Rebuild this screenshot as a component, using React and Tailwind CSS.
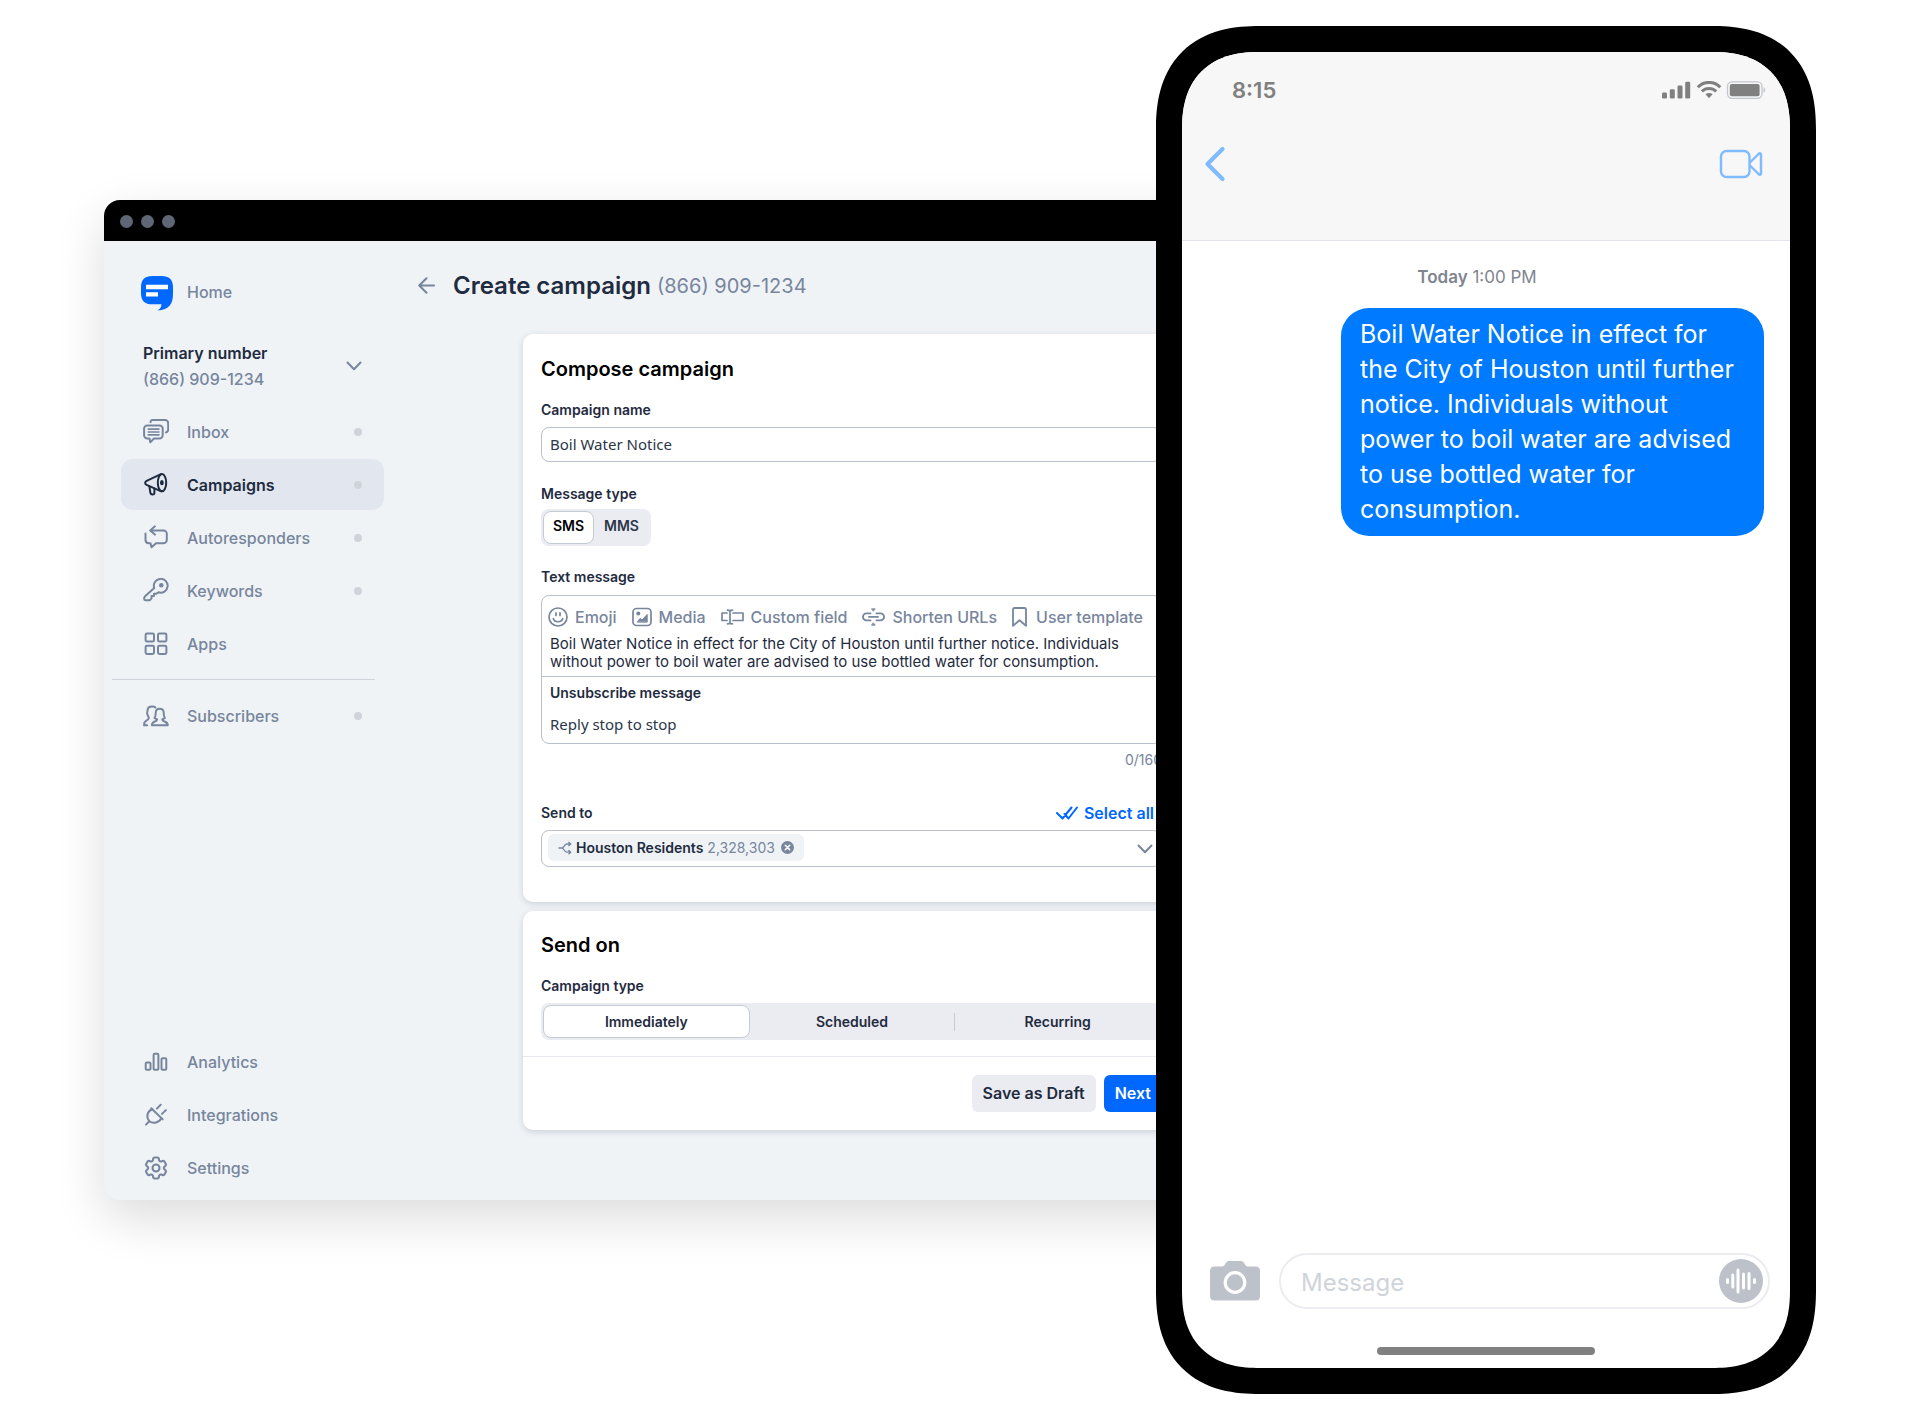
import React from "react";
import { HiOutlineCog6Tooth } from "react-icons/hi2";

const stroke = {
  fill: "none",
  stroke: "currentColor",
  strokeWidth: 2,
  strokeLinecap: "round",
  strokeLinejoin: "round",
};

function NavIcon({ children }) {
  return (
    <svg viewBox="0 0 26 26" className="size-[26px] shrink-0" aria-hidden="true" {...stroke}>
      {children}
    </svg>
  );
}

const InboxIcon = () => (
  <NavIcon>
    <path d="M7.5 3.2C7.7 1.8 8.5 1.1 9.8 1.1H22a3.2 3.2 0 0 1 3.2 3.2v6.2c0 1.600-.8 2.600-2.300 2.900" />
    <path d="M4.300 6.400H16.500a3.200 3.200 0 0 1 3.200 3.200v6.700a3.200 3.200 0 0 1-3.200 3.200H11L7.300 23.200 6.500 19.500H4.300A3.200 3.200 0 0 1 1.100 16.300V9.600A3.200 3.200 0 0 1 4.300 6.400Z" />
    <path strokeWidth="1.600" d="M5.200 10.100H16M5.200 13H16M5.200 15.900H16" />
  </NavIcon>
);

const MegaphoneIcon = () => (
  <NavIcon>
    <ellipse cx="19" cy="10.700" rx="4.200" ry="8.600" />
    <path d="M18 2.200 3.600 8.900c-1.900.9-1.900 3.100 0 4L18.200 19.300" />
    <ellipse cx="18.900" cy="10.700" rx=".9" ry="1.600" fill="currentColor" />
    <path d="M6.300 14.200 7.500 21.300c.4 1.700 3.900 1.700 3.900-.3V16.600" />
  </NavIcon>
);

const AutoIcon = () => (
  <NavIcon>
    <path d="M11.900 1.300 7.300 5.400 11.900 9.600" />
    <path d="M7.600 5.400H20.400a3.400 3.400 0 0 1 3.400 3.400v6.100a3.400 3.400 0 0 1-3.400 3.400H13L8.500 22.300 7.500 18.300H5.800A3.500 3.500 0 0 1 2.500 14.800V8.600" />
  </NavIcon>
);

const KeyIcon = () => (
  <NavIcon>
    <path d="M11.200 9.900A6.900 6.900 0 1 1 15.600 14.300L13.400 15.700H11V18.100H8.500V20.400L6.800 22.200H2.300C1.500 22.200 1.200 21.900 1.200 21.100V20c0-.6.200-1 .6-1.400Z" />
    <circle cx="18.300" cy="7.200" r="1.300" fill="currentColor" />
  </NavIcon>
);

const AppsIcon = () => (
  <NavIcon>
    <rect x="2.600" y="2.400" width="8.400" height="8.200" rx="1.400" />
    <rect x="15" y="2.400" width="8.400" height="8.200" rx="1.400" />
    <rect x="2.600" y="14.700" width="8.400" height="8.200" rx="1.400" />
    <rect x="15" y="14.700" width="8.400" height="8.200" rx="1.400" />
  </NavIcon>
);

const PeopleIcon = () => (
  <NavIcon>
    <path d="M9 22.300H24.700c.3-2.200-1.200-3-3.200-3.800-1.600-.6-2.200-1.100-2.200-2.100.6-.4 1.600-.6 2.600-1.400-1.200-1.200-1.200-2.700-1.200-4.900 0-2.700-1.500-4.300-4-4.300s-4 1.600-4 4.300c0 2.200 0 3.700-1.200 4.900 1 .8 2 1 2.600 1.400 0 1-.6 1.500-2.200 2.100-2 .8-3.200 1.600-2.900 3.800Z" />
    <path d="M12.400 4.500C11.700 3.700 10.600 3.400 9.200 3.400 6.300 3.400 4.500 5 4.500 7.700c0 1-.4 1.600-.4 2.500 0 1.800 1.700 3.200 1.700 4.900 0 1.200-1.200 1.800-2.500 2.500C1.700 18.500.9 19.900 1.100 22.300H4.200" />
  </NavIcon>
);

const BarsIcon = () => (
  <NavIcon>
    <rect x="2.700" y="13.500" width="4.800" height="7.300" rx="1.100" />
    <rect x="10.600" y="4.800" width="4.800" height="16" rx="1.100" />
    <rect x="18.500" y="9.200" width="4.800" height="11.600" rx="1.100" />
  </NavIcon>
);

const PlugIcon = () => (
  <NavIcon>
    <path d="M3 22.600 6.300 19.300M8.300 6.200 19.700 17.400M17.700 2.800 13.900 6.600M22.900 8.100 19 11.900" />
    <path d="M9.200 7.200C4 9.300 2.900 15 6.300 19.200 10.400 22.200 16 20.800 18.400 16.300" />
  </NavIcon>
);

const CogIcon = () => <HiOutlineCog6Tooth strokeWidth={1.8} className="-mx-px size-7 shrink-0" aria-hidden="true" />;

function NavItem({ icon, label, dot, active }) {
  const tone = active ? "bg-[#e2e6ee] font-semibold text-[#1f2b40]" : "font-medium text-[#77859d]";
  return (
    <li>
      <a href="#" className={`flex h-[51px] items-center gap-[18px] rounded-xl px-[22px] ${tone}`}>
        {icon}
        <span className="flex-1 text-base">{label}</span>
        {dot && <span className="size-2 rounded-full bg-[#cfd4db]" />}
      </a>
    </li>
  );
}

function Sidebar() {
  return (
    <aside className="flex w-[296px] shrink-0 flex-col pb-[7px] pl-[17px] pr-4 pt-[35px]">
      <a href="#" className="flex h-9 items-start gap-3.5 pl-5 text-[#77859d]">
        <svg viewBox="0 0 32 35" className="h-[35px] w-8" aria-hidden="true">
          <path
            fill="#0068ff"
            d="M11.500 0h9C28.300 0 32 3.700 32 11v6.500C32 28 28.500 33.500 16.500 34.500c2.600-1.500 3.800-3.300 4-6.200h-9C3.700 28.300 0 24.800 0 17.500V11C0 3.700 3.700 0 11.500 0Z"
          />
          <path fill="#fff" d="M5 8.800H27v4.500H5zM5 16.300H17v4.200H5z" />
        </svg>
        <span className="pt-1 text-base font-medium">Home</span>
      </a>
      <button type="button" className="mt-7 flex items-center justify-between pl-[22px] pr-[22px] text-left">
        <span>
          <span className="block text-base leading-[26px] font-semibold text-[#1f2b40]">Primary number</span>
          <span className="block text-base leading-[26px] font-medium text-[#77859d]">(866) 909-1234</span>
        </span>
        <svg viewBox="0 0 16 10" className="h-2.5 w-4 text-[#77859d]" aria-hidden="true" {...stroke}>
          <path d="M1.500 1.500 8 8.200 14.500 1.500" />
        </svg>
      </button>
      <nav className="mt-[14px] flex flex-1 flex-col">
        <ul className="flex flex-col gap-0.5">
          <NavItem icon={<InboxIcon />} label="Inbox" dot />
          <NavItem icon={<MegaphoneIcon />} label="Campaigns" dot active />
          <NavItem icon={<AutoIcon />} label="Autoresponders" dot />
          <NavItem icon={<KeyIcon />} label="Keywords" dot />
          <NavItem icon={<AppsIcon />} label="Apps" />
        </ul>
        <hr className="-ml-[9px] mr-[9px] mt-[10px] border-[#cfd4db]" />
        <ul className="mt-[10px]">
          <NavItem icon={<PeopleIcon />} label="Subscribers" dot />
        </ul>
        <ul className="mt-auto flex flex-col gap-0.5">
          <NavItem icon={<BarsIcon />} label="Analytics" />
          <NavItem icon={<PlugIcon />} label="Integrations" />
          <NavItem icon={<CogIcon />} label="Settings" />
        </ul>
      </nav>
    </aside>
  );
}

const tools = [
  {
    label: "Emoji",
    icon: (
      <svg viewBox="0 0 20 20" className="size-5" aria-hidden="true" {...stroke} strokeWidth="1.700">
        <circle cx="10" cy="10" r="9" />
        <path d="M8 5.800V8.500M12 5.800V8.500M5.300 11.500C6.500 15.800 13.500 15.800 14.700 11.500" />
      </svg>
    ),
  },
  {
    label: "Media",
    icon: (
      <svg viewBox="0 0 20 20" className="size-5" aria-hidden="true" {...stroke} strokeWidth="1.700">
        <rect x="1" y="1.500" width="18" height="17" rx="3.500" />
        <circle cx="6.300" cy="6.500" r="1.200" fill="currentColor" />
        <path fill="currentColor" strokeWidth="1" d="M5.500 14.800 8 11.500 10 13 15.200 7.500V14.800Z" />
      </svg>
    ),
  },
  {
    label: "Custom field",
    icon: (
      <svg viewBox="0 0 23 20" className="h-5 w-[23px]" aria-hidden="true" {...stroke} strokeWidth="1.700">
        <path d="M6 6H1V13.500H6M12 6H22V13.500H12M9 4V16M6.500 3.200C8 3.200 9 3.400 9 4.400 9 3.400 10 3.200 11.500 3.200M6.500 16.800C8 16.800 9 16.600 9 15.600 9 16.600 10 16.800 11.500 16.800" />
      </svg>
    ),
  },
  {
    label: "Shorten URLs",
    icon: (
      <svg viewBox="0 0 23 20" className="h-5 w-[23px]" aria-hidden="true" {...stroke} strokeWidth="1.900">
        <path d="M8.500 6.400H4.500a3.500 3.500 0 0 0 0 7H8.500M14.500 6.400h4a3.500 3.500 0 0 1 0 7H14.500M7 9.900H16" />
        <path fill="currentColor" strokeWidth=".8" d="M9.800 1.800H13.200L11.500 4ZM9.800 18.200H13.200L11.500 16Z" />
      </svg>
    ),
  },
  {
    label: "User template",
    icon: (
      <svg viewBox="0 0 15 20" className="mr-0.5 h-5 w-[15px]" aria-hidden="true" {...stroke} strokeWidth="1.800">
        <path d="M1 2.500C1 1.500 1.500 1 2.500 1h10c1 0 1.500.5 1.500 1.500V18.800L7.500 13.300 1 18.800Z" />
      </svg>
    ),
  },
];

const cardClass = "rounded-[10px] bg-white shadow-[0_2px_6px_rgba(31,43,64,0.16)]";
const labelClass = "block text-sm leading-5 font-semibold text-[#1f2b40]";

function ComposeCard() {
  return (
    <section className={`${cardClass} px-[18px] pb-[35px] pt-[23px]`}>
      <h2 className="text-xl leading-6 font-semibold text-black">Compose campaign</h2>
      <label htmlFor="campaign-name" className={`${labelClass} mt-[19px]`}>
        Campaign name
      </label>
      <input
        id="campaign-name"
        type="text"
        defaultValue="Boil Water Notice"
        className="mt-[7px] block h-[35px] w-full rounded-lg border border-[#b9c0cb] bg-white px-2 pb-0.5 font-['Noto_Sans',sans-serif] text-[15px] text-[#2b364a]"
      />
      <p id="message-type" className={`${labelClass} mt-[22px]`}>
        Message type
      </p>
      <div role="group" aria-labelledby="message-type" className="mt-[5px] inline-flex h-[37px] rounded-lg bg-[#ebecf1] p-0.5 align-top text-sm font-semibold">
        <button type="button" aria-pressed="true" className="w-[51px] rounded-lg border border-[#c5cbd4] bg-white pb-1 text-black">
          SMS
        </button>
        <button type="button" aria-pressed="false" className="w-[55px] pb-1 text-[#2b364a]">
          MMS
        </button>
      </div>
      <label htmlFor="text-message" className={`${labelClass} mt-[21px]`}>
        Text message
      </label>
      <div className="mt-2 rounded-lg border border-[#b9c0cb]">
        <div className="flex items-center gap-[15px] whitespace-nowrap px-1.5 pt-[9px] text-[#77859d]">
          {tools.map((t) => (
            <button key={t.label} type="button" className="flex h-6 items-center gap-[7px] text-base font-medium">
              {t.icon}
              {t.label}
            </button>
          ))}
        </div>
        <textarea
          id="text-message"
          rows={2}
          className="mt-1.5 block h-9 w-full resize-none overflow-hidden pl-2 pr-10 text-[15px] leading-[18px] text-[#1f2b40]"
          defaultValue="Boil Water Notice in effect for the City of Houston until further notice. Individuals without power to boil water are advised to use bottled water for consumption."
        />
        <div className="mt-[5px] border-t border-[#b9c0cb] px-2 pb-[9px] pt-1.5">
          <label htmlFor="unsubscribe" className={labelClass}>
            Unsubscribe message
          </label>
          <input
            id="unsubscribe"
            type="text"
            defaultValue="Reply stop to stop"
            className="mt-[11px] block h-5 w-full font-['Noto_Sans',sans-serif] text-[15px] text-[#2b364a]"
          />
        </div>
      </div>
      <p className="mt-1.5 text-right text-sm leading-5 text-[#77859d]">0/160</p>
      <div className="mt-[33px] flex items-center justify-between">
        <span className={labelClass}>Send to</span>
        <button type="button" className="mr-2 flex items-center gap-1.5 text-base leading-5 font-semibold text-[#0068ff]">
          <svg viewBox="0 0 22 14" className="h-3.5 w-[22px]" aria-hidden="true" {...stroke} strokeWidth="2">
            <path d="M1 7 6.500 12.500 15.500 1.500M8.500 8 12.500 12.500 21 1.500" />
          </svg>
          Select all
        </button>
      </div>
      <div className="mt-[7px] flex h-[37px] items-center justify-between rounded-lg border border-[#b9c0cb] pl-1.5 pr-2">
        <span className="mb-0.5 flex h-[27px] items-center rounded-md bg-[#eff3f6] px-2.5 text-sm">
          <svg viewBox="0 0 14 14" className="mr-1 size-3.5 text-[#77859d]" aria-hidden="true" {...stroke} strokeWidth="1.300">
            <path d="M1 7H4C6 7 6 3 9 3H12.500M4 7C6 7 6 11.200 9 11.200H12.500M10.800 1.300 12.800 3 10.800 4.700M10.800 9.500 12.800 11.200 10.800 12.900" />
          </svg>
          <span className="mr-1 font-semibold text-[#1f2b40]">Houston Residents</span>
          <span className="text-[#77859d]">2,328,303</span>
          <button type="button" aria-label="Remove Houston Residents" className="ml-1.5">
            <svg viewBox="0 0 13 13" className="size-[13px]" aria-hidden="true">
              <circle cx="6.500" cy="6.500" r="6.500" fill="#77859d" />
              <path d="M4.300 4.300 8.700 8.700M8.700 4.300 4.300 8.700" stroke="#fff" strokeWidth="1.600" strokeLinecap="round" />
            </svg>
          </button>
        </span>
        <button type="button" aria-label="Open recipient list" className="text-[#77859d]">
          <svg viewBox="0 0 16 10" className="h-2.5 w-4" aria-hidden="true" {...stroke}>
            <path d="M1.500 1.500 8 8.200 14.500 1.500" />
          </svg>
        </button>
      </div>
    </section>
  );
}

function SendCard() {
  return (
    <section className={`${cardClass} mt-[9px]`}>
      <div className="px-[18px] pb-4 pt-[22px]">
        <h2 className="text-xl leading-6 font-semibold text-black">Send on</h2>
        <p id="campaign-type" className={`${labelClass} mt-[19px]`}>
          Campaign type
        </p>
        <div role="group" aria-labelledby="campaign-type" className="mt-[7px] flex h-[37px] items-center rounded-lg bg-[#ebecf1] p-0.5 text-sm font-semibold text-[#1f2b40]">
          <button type="button" aria-pressed="true" className="h-full flex-1 rounded-lg border border-[#c5cbd4] bg-white">
            Immediately
          </button>
          <button type="button" aria-pressed="false" className="h-[18px] flex-1 border-r border-[#c5cbd4] leading-[18px]">
            Scheduled
          </button>
          <button type="button" aria-pressed="false" className="h-full flex-1">
            Recurring
          </button>
        </div>
      </div>
      <div className="flex justify-end gap-2 border-t border-[#e6e9ee] px-[18px] py-[18px] text-base font-semibold">
        <button type="button" className="h-[37px] rounded-md bg-[#ebecf1] px-[11px] pb-0.5 text-[#1f2b40]">
          Save as Draft
        </button>
        <button type="button" className="h-[37px] rounded-md bg-[#0068ff] px-[11px] pb-0.5 text-white">
          Next
        </button>
      </div>
    </section>
  );
}

function BrowserWindow() {
  return (
    <div className="mt-[174px] flex min-h-[1000px] min-w-0 flex-1 flex-col overflow-hidden rounded-2xl bg-[#eff3f6] shadow-[0_18px_50px_rgba(0,0,0,0.14)]">
      <div className="flex h-[41px] items-center gap-2 bg-black pl-4 pt-px">
        <span className="size-[13px] rounded-full bg-[#5f6675]" />
        <span className="size-[13px] rounded-full bg-[#5f6675]" />
        <span className="size-[13px] rounded-full bg-[#5f6675]" />
      </div>
      <div className="flex flex-1">
        <Sidebar />
        <div className="min-w-0 flex-1">
          <header className="flex h-[93px] items-center pb-1 pl-[18px]">
            <button type="button" aria-label="Back" className="text-[#77859d]">
              <svg viewBox="0 0 17 17" className="size-[17px]" aria-hidden="true" {...stroke}>
                <path d="M16 8.500H1.200M8.500 1.200 1.200 8.500 8.500 15.800" />
              </svg>
            </button>
            <h1 className="ml-[18px] text-2xl font-semibold text-[#1f2b40]">Create campaign</h1>
            <span className="ml-1.5 text-xl text-[#77859d]">(866) 909-1234</span>
          </header>
          <div className="ml-[123px] mr-[120px]">
            <ComposeCard />
            <SendCard />
          </div>
        </div>
      </div>
    </div>
  );
}

function Phone() {
  return (
    <div className="z-10 -ml-[144px] flex min-h-[1368px] w-[660px] shrink-0 rounded-[88px] bg-black p-[26px] [corner-shape:superellipse(1.27)] supports-[corner-shape:squircle]:rounded-[104px]">
      <div className="flex flex-1 flex-col overflow-hidden rounded-[66px] bg-white [corner-shape:superellipse(1.27)] supports-[corner-shape:squircle]:rounded-[78px]">
        <header className="flex h-[189px] flex-col border-b border-[#e1e5eb] bg-[#f7f7f7] pl-[22px] pr-6 pt-6">
          <div className="flex items-center justify-between pl-7 text-[#808080]">
            <span className="text-[22px] leading-7 font-semibold">8:15</span>
            <svg viewBox="0 0 104 18" className="h-[18px] w-[104px]" fill="currentColor" aria-hidden="true">
              <rect x="0" y="11.500" width="5" height="6" rx="1.200" />
              <rect x="7.800" y="8.300" width="5" height="9.200" rx="1.200" />
              <rect x="15.500" y="4.500" width="5" height="13" rx="1.200" />
              <rect x="23.200" y=".8" width="5" height="16.700" rx="1.200" />
              <g fill="none" stroke="currentColor" strokeWidth="3">
                <path d="M35.800 6.200C42 -.2 52 -.2 58.300 6.200" />
                <path d="M39.900 10.400C43.800 6.500 50.300 6.500 54.200 10.400" />
              </g>
              <path d="M43.500 13.300C45.500 11.600 48.600 11.600 50.600 13.300L47 17.200Z" />
              <rect x="65.500" y=".9" width="34.500" height="16.400" rx="4.500" fill="none" stroke="#c3c6cc" strokeWidth="1.300" />
              <rect x="67.800" y="3" width="29.800" height="12.200" rx="2" />
              <path fill="#c3c6cc" d="M101.500 6.200C103.700 7 103.700 11.200 101.500 12Z" />
            </svg>
          </div>
          <div className="mt-[42px] flex items-center justify-between pr-[3px]">
            <button type="button" aria-label="Back to conversations" className="text-[#80bbff]">
              <svg viewBox="0 0 22 36" className="h-9 w-[22px]" aria-hidden="true" {...stroke} strokeWidth="4.200">
                <path d="M18.500 3 3.500 18 18.500 33" />
              </svg>
            </button>
            <button type="button" aria-label="Start video call" className="text-[#80bbff]">
              <svg viewBox="0 0 44 30" className="h-[30px] w-11" aria-hidden="true" {...stroke} strokeWidth="2.400">
                <rect x="2" y="2" width="28.500" height="26" rx="5.500" />
                <path d="M31 13.500 39.500 5C41 3.700 42 4.200 42 5.800V24.200C42 25.800 41 26.300 39.500 25L31 16.500" />
              </svg>
            </button>
          </div>
        </header>
        <div className="flex flex-1 flex-col pr-[26px] pt-6">
          <p className="pl-2 text-center text-[17px] leading-6 text-[#808590]">
            <span className="font-semibold">Today</span> 1:00 PM
          </p>
          <p className="mt-[19px] w-[423px] self-end rounded-[28px] bg-[#007aff] px-[19px] pb-[9px] pt-[9px] text-[25px] leading-[35px] text-white">
            Boil Water Notice in effect for the City of Houston until further notice. Individuals without power to boil water are advised to use bottled water for consumption.
          </p>
        </div>
        <div className="flex items-center pl-7 pr-5">
          <button type="button" aria-label="Take a photo" className="text-[#bcc1ca]">
            <svg viewBox="0 0 50 40" className="h-10 w-[50px]" aria-hidden="true">
              <path
                fill="currentColor"
                d="M4.500 5.500H12.500C15 5.500 15.500 0 19 0H31C34.500 0 35 5.500 37.500 5.500H45.500Q50 5.500 50 10V35Q50 39.500 45.500 39.500H4.500Q0 39.500 0 35V10Q0 5.500 4.500 5.500Z"
              />
              <circle cx="25" cy="21.500" r="9.800" fill="none" stroke="#fff" strokeWidth="3.200" />
            </svg>
          </button>
          <div className="ml-[19px] flex h-[56px] flex-1 items-center rounded-full border-2 border-[#ebecf1] pl-5 pr-[5px]">
            <input
              type="text"
              aria-label="Message"
              placeholder="Message"
              className="min-w-0 flex-1 pt-1 text-2xl text-[#1f2b40] outline-none placeholder:text-[#cfd4db]"
            />
            <button type="button" aria-label="Record audio">
              <svg viewBox="0 0 44 44" className="size-11" aria-hidden="true">
                <circle cx="22" cy="22" r="22" fill="#bcc1ca" />
                <path
                  d="M8.500 20.500V23.500M13.800 16V28M19 11V33M24.500 15V29M30 14.500V29.500M35.500 20.500V23.500"
                  stroke="#fff"
                  strokeWidth="3"
                  strokeLinecap="round"
                />
              </svg>
            </button>
          </div>
        </div>
        <div className="mb-[13px] mt-[38px] h-2 w-[218px] self-center rounded-full bg-[#808080]" />
      </div>
    </div>
  );
}

export default function App() {
  return (
    <main className="flex min-h-screen items-start bg-white px-[104px] py-[26px] font-['Inter',sans-serif]">
      <BrowserWindow />
      <Phone />
    </main>
  );
}
